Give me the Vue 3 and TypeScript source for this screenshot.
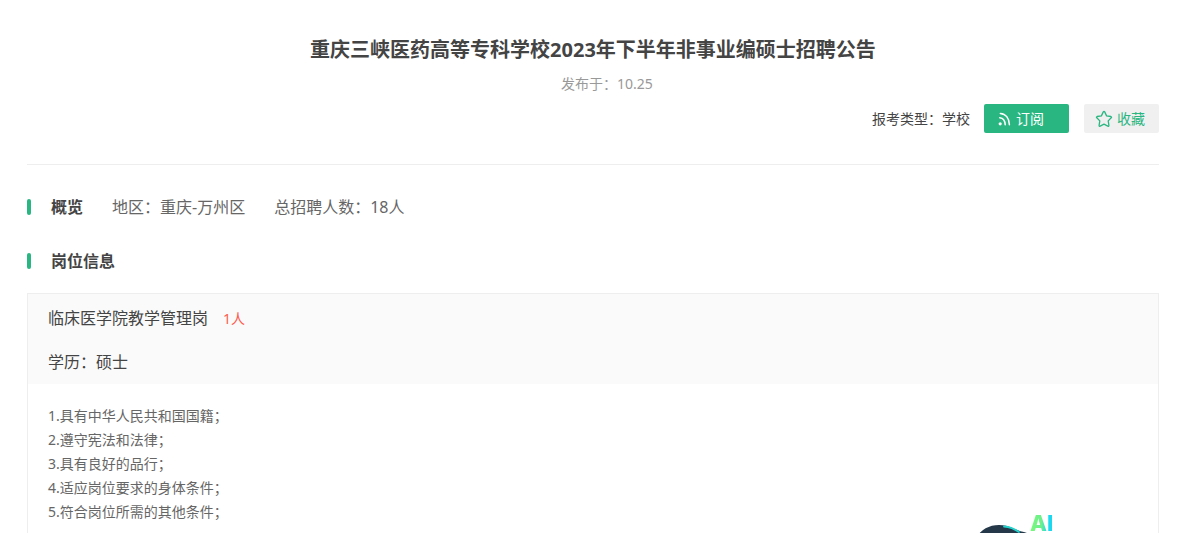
<script setup lang="ts">
const overview: string[] = ['地区：重庆-万州区', '总招聘人数：18人']

const requirements: string[] = [
  '1.具有中华人民共和国国籍；',
  '2.遵守宪法和法律；',
  '3.具有良好的品行；',
  '4.适应岗位要求的身体条件；',
  '5.符合岗位所需的其他条件；',
]
</script>

<template>
  <main class="page">
    <header class="head">
      <h1 class="title">重庆三峡医药高等专科学校2023年下半年非事业编硕士招聘公告</h1>
      <p class="date">发布于：10.25</p>
      <div class="tools">
        <span class="type">报考类型：学校</span>
        <button type="button" class="btn subscribe">
          <svg class="icon" width="16" height="16" viewBox="0 0 16 16" aria-hidden="true">
            <circle cx="4.2" cy="12.8" r="1.6" fill="currentColor" />
            <path
              d="M3.800 6.800C7.200 7.200 9 9.800 9.200 13.800M4.300 2.400C9.800 2.800 13.200 7.200 13.400 13.800"
              fill="none"
              stroke="currentColor"
              stroke-width="1.500"
              stroke-linecap="round"
            />
          </svg>
          <span>订阅</span>
        </button>
        <button type="button" class="btn favorite">
          <svg class="icon" width="18" height="18" viewBox="0 0 18 18" aria-hidden="true">
            <path
              d="M8.300 1.900Q9 .9 9.700 1.900L11.600 5.900L15.900 6.500Q17 6.900 16.200 7.800L13.200 10.900L13.900 15.400Q13.900 16.600 12.800 16.200L9 14.200L5.200 16.200Q4.100 16.600 4.100 15.400L4.800 10.900L1.800 7.800Q1 6.900 2.100 6.500L6.400 5.900Z"
              fill="none"
              stroke="currentColor"
              stroke-width="1.300"
              stroke-linejoin="round"
            />
          </svg>
          <span>收藏</span>
        </button>
      </div>
    </header>

    <section class="row">
      <h2 class="heading">概览</h2>
      <span v-for="item in overview" :key="item" class="fact">{{ item }}</span>
    </section>

    <section>
      <div class="row">
        <h2 class="heading">岗位信息</h2>
      </div>
      <article class="card">
        <div class="card-head">
          <div class="post">
            <h3 class="post-name">临床医学院教学管理岗</h3>
            <span class="count">1人</span>
          </div>
          <p class="degree">学历：硕士</p>
        </div>
        <div class="card-body">
          <p v-for="line in requirements" :key="line" class="line">{{ line }}</p>
        </div>
      </article>
    </section>

    <aside class="assistant">
      <svg class="robot" width="80" height="80" viewBox="0 0 80 80" aria-hidden="true">
        <path d="M-4 40C-4 22 8 11 23 11C34 11 38 16 48 18C56 20 62 28 62 40C62 60 50 76 30 76C12 76 -4 60 -4 40Z" fill="#24384a" />
        <path d="M28 12.500Q36 13 43 18" fill="none" stroke="#25d3cd" stroke-width="1.800" stroke-linecap="round" />
      </svg>
      <span class="ai">AI</span>
    </aside>
  </main>
</template>

<style>
body {
  margin: 0;
  background: #fff;
  overflow: hidden;
}
</style>

<style scoped>
.page {
  height: 100vh;
  box-sizing: border-box;
  overflow: hidden;
  padding: 35px 25px 0 27px;
  color: #444;
  font-family: "Noto Sans", "Noto Sans CJK SC", sans-serif;
  font-size: 14px;
}

h1,
h2,
h3,
p {
  margin: 0;
}

.head {
  padding-bottom: 31px;
  margin-bottom: 27px;
  border-bottom: 1px solid #eee;
}

.title {
  font-size: 20px;
  line-height: 30px;
  font-weight: 700;
  text-align: center;
}

.date {
  padding-left: 28px;
  margin: 9px 0 10px;
  line-height: 20px;
  color: #999;
  text-align: center;
}

.tools {
  display: flex;
  justify-content: flex-end;
  align-items: center;
}

.type {
  margin-right: 14px;
  line-height: 20px;
}

.btn {
  display: flex;
  align-items: center;
  height: 29px;
  padding: 0 12px;
  border: 0;
  border-radius: 2px;
  font: inherit;
  line-height: 20px;
  cursor: pointer;
}

.subscribe {
  width: 85px;
  gap: 4px;
  color: #fff;
  background: #2ab681;
}

.favorite {
  width: 75px;
  margin-left: 15px;
  padding: 0 11px;
  gap: 4px;
  color: #2ab681;
  background: #f0f0f0;
}

.icon {
  flex: none;
}

.row {
  display: flex;
  align-items: center;
  gap: 29px;
  margin-bottom: 24px;
  font-size: 16px;
  line-height: 30px;
}

.heading {
  display: flex;
  align-items: center;
  font-size: 16px;
  font-weight: 700;
}

.heading::before {
  content: "";
  width: 4px;
  height: 16px;
  margin-right: 20px;
  border-radius: 2px;
  background: #2ab681;
}

.fact {
  color: #666;
}

.card {
  margin-top: -7px;
  border: 1px solid #eee;
}

.card-head {
  padding: 9px 20px 7px;
  background: #fafafa;
}

.post {
  display: flex;
  align-items: center;
  gap: 15px;
  margin-bottom: 14px;
}

.post-name,
.degree {
  font-size: 16px;
  line-height: 30px;
  font-weight: 400;
}

.count {
  color: #ff5a4e;
}

.card-body {
  padding: 20px;
}

.line {
  line-height: 24px;
  color: #666;
}

.assistant {
  position: fixed;
  right: 124px;
  bottom: -65px;
  width: 84px;
  height: 84px;
}

.robot {
  position: absolute;
  left: 0;
  top: 0;
}

.ai {
  position: absolute;
  left: 54px;
  top: 0;
  font-family: Inter, sans-serif;
  font-size: 22px;
  line-height: 18px;
  font-weight: 800;
  color: transparent;
  background: linear-gradient(90deg, #7bf77b 0%, #6cf08c 50%, #19d8f0 75%);
  background-clip: text;
}
</style>
